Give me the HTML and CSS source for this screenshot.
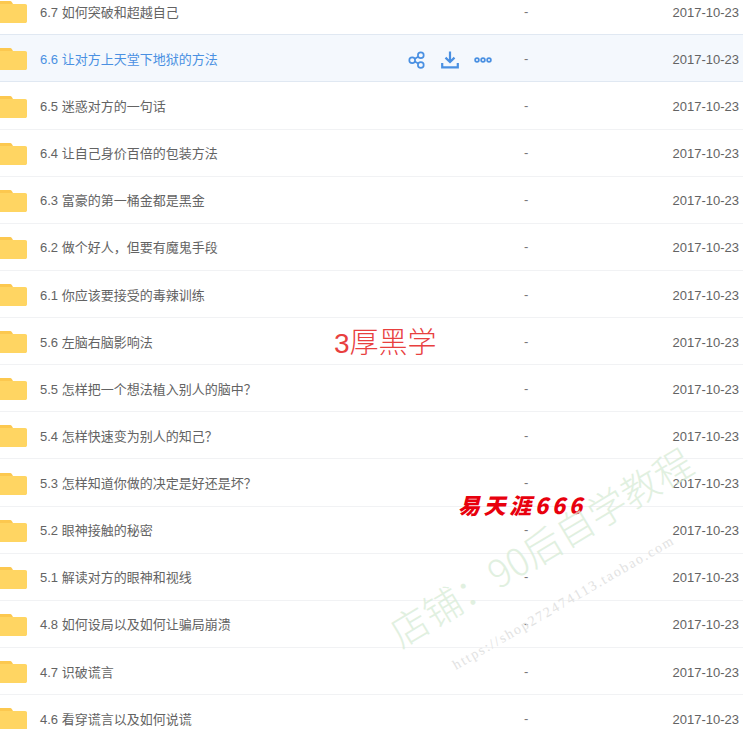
FILE: index.html
```html
<!DOCTYPE html>
<html>
	<head>
	<meta charset="utf-8"/>
	<meta name="viewport" content="width=device-width, initial-scale=1.0"/>
	<link rel="stylesheet" href="styles.css">
	</head>
	<body>
		<div class="list">
			<div class="row"><svg class="folder" viewBox="0 0 27 22"><use href="#folder"/></svg><span class="name">6.7 如何突破和超越自己</span><span class="actions"></span><span class="size">-</span><span class="date">2017-10-23</span></div>
			<div class="row active"><svg class="folder" viewBox="0 0 27 22"><use href="#folder"/></svg><span class="name">6.6 让对方上天堂下地狱的方法</span>
				<span class="actions">
					<svg class="act" viewBox="0 0 18 18"><circle cx="12.8" cy="4.2" r="2.9"/><circle cx="4.2" cy="9.2" r="2.9"/><circle cx="12.8" cy="14" r="2.9"/><path d="M6.8 7.8l3.4-2M6.8 10.6l3.4 2"/></svg>
					<svg class="act" viewBox="0 0 18 18"><path class="thick" d="M9 0.5v10M4.5 6.6L9 11l4.5-4.4M1.2 12v4.3h15.6V12"/></svg>
					<svg class="act" viewBox="0 0 18 18"><circle cx="3" cy="9" r="1.9"/><circle cx="9" cy="9" r="1.9"/><circle cx="15" cy="9" r="1.9"/></svg>
				</span>
				<span class="size">-</span><span class="date">2017-10-23</span></div>
			<div class="row"><svg class="folder" viewBox="0 0 27 22"><use href="#folder"/></svg><span class="name">6.5 迷惑对方的一句话</span><span class="actions"></span><span class="size">-</span><span class="date">2017-10-23</span></div>
			<div class="row"><svg class="folder" viewBox="0 0 27 22"><use href="#folder"/></svg><span class="name">6.4 让自己身价百倍的包装方法</span><span class="actions"></span><span class="size">-</span><span class="date">2017-10-23</span></div>
			<div class="row"><svg class="folder" viewBox="0 0 27 22"><use href="#folder"/></svg><span class="name">6.3 富豪的第一桶金都是黑金</span><span class="actions"></span><span class="size">-</span><span class="date">2017-10-23</span></div>
			<div class="row"><svg class="folder" viewBox="0 0 27 22"><use href="#folder"/></svg><span class="name">6.2 做个好人，但要有魔鬼手段</span><span class="actions"></span><span class="size">-</span><span class="date">2017-10-23</span></div>
			<div class="row"><svg class="folder" viewBox="0 0 27 22"><use href="#folder"/></svg><span class="name">6.1 你应该要接受的毒辣训练</span><span class="actions"></span><span class="size">-</span><span class="date">2017-10-23</span></div>
			<div class="row"><svg class="folder" viewBox="0 0 27 22"><use href="#folder"/></svg><span class="name">5.6 左脑右脑影响法</span><span class="actions"></span><span class="size">-</span><span class="date">2017-10-23</span></div>
			<div class="row"><svg class="folder" viewBox="0 0 27 22"><use href="#folder"/></svg><span class="name">5.5 怎样把一个想法植入别人的脑中？</span><span class="actions"></span><span class="size">-</span><span class="date">2017-10-23</span></div>
			<div class="row"><svg class="folder" viewBox="0 0 27 22"><use href="#folder"/></svg><span class="name">5.4 怎样快速变为别人的知己？</span><span class="actions"></span><span class="size">-</span><span class="date">2017-10-23</span></div>
			<div class="row"><svg class="folder" viewBox="0 0 27 22"><use href="#folder"/></svg><span class="name">5.3 怎样知道你做的决定是好还是坏？</span><span class="actions"></span><span class="size">-</span><span class="date">2017-10-23</span></div>
			<div class="row"><svg class="folder" viewBox="0 0 27 22"><use href="#folder"/></svg><span class="name">5.2 眼神接触的秘密</span><span class="actions"></span><span class="size">-</span><span class="date">2017-10-23</span></div>
			<div class="row"><svg class="folder" viewBox="0 0 27 22"><use href="#folder"/></svg><span class="name">5.1 解读对方的眼神和视线</span><span class="actions"></span><span class="size">-</span><span class="date">2017-10-23</span></div>
			<div class="row"><svg class="folder" viewBox="0 0 27 22"><use href="#folder"/></svg><span class="name">4.8 如何设局以及如何让骗局崩溃</span><span class="actions"></span><span class="size">-</span><span class="date">2017-10-23</span></div>
			<div class="row"><svg class="folder" viewBox="0 0 27 22"><use href="#folder"/></svg><span class="name">4.7 识破谎言</span><span class="actions"></span><span class="size">-</span><span class="date">2017-10-23</span></div>
			<div class="row"><svg class="folder" viewBox="0 0 27 22"><use href="#folder"/></svg><span class="name">4.6 看穿谎言以及如何说谎</span><span class="actions"></span><span class="size">-</span><span class="date">2017-10-23</span></div>
		</div>

		<!-- pasted over the screenshot -->
		<div class="stamp title"><b>3</b>厚黑学</div>
		<div class="stamp author">易天涯666</div>
		<div class="stamp mark">店铺：90后自学教程</div>
		<div class="stamp url">https://shop272474113.taobao.com</div>

		<svg class="defs" width="0" height="0">
			<symbol id="folder" viewBox="0 0 27 22">
				<path fill="#fcc84f" d="M-2 0h11.5c1.2 0 2 .5 2.6 1.4L13 3h-15z"/>
				<path fill="#ffd562" d="M-2 3h27.2c1 0 1.8.8 1.8 1.8v15.4c0 1-.8 1.8-1.8 1.8H-2z"/>
			</symbol>
		</svg>
	</body>
</html>
```
FILE: styles.css
```css
html, body {
	margin: 0;
	padding: 0;
	height: 729px;
	overflow: hidden;
	background-color: #ffffff;
}

body {
	position: relative;
	font-family: "Liberation Sans", "Noto Sans CJK SC", sans-serif;
	font-size: 13px;
	color: #636363;
}

.defs {
	position: absolute;
}

.list {
	margin-top: -11.8px;
}

.row {
	display: grid;
	grid-template-columns: 40px 368px 116px 1fr auto;
	align-items: center;
	height: 47.13px;
	box-sizing: border-box;
	padding-right: 4px;
	border-bottom: 1px solid #f1f2f4;
}

.row.active {
	background-color: #f4f8fd;
	border-bottom-color: #e0e8f2;
	box-shadow: 0 -1px 0 #e0e8f2;
	color: #4a90e2;
}

.row.active .date {
	color: #636363;
}

.folder {
	width: 27px;
	height: 22px;
	margin-top: 2px;
	overflow: hidden;
}

.date {
	margin-top: 2px;
}

.actions {
	display: flex;
	align-items: center;
	gap: 15px;
	margin-top: 3px;
}

.act {
	width: 18px;
	height: 18px;
	fill: none;
	stroke: #4a90e2;
	stroke-width: 1.7;
}

.act .thick {
	stroke-width: 2.2;
}

.size {
	color: #777777;
}

.stamp {
	position: absolute;
	white-space: nowrap;
}

.title {
	left: 334px;
	top: 320px;
	font-family: "Noto Sans CJK SC", sans-serif;
	font-size: 29px;
	font-weight: 300;
	line-height: 40px;
	color: #e8403f;
}

.title b {
	font-family: "Liberation Sans", sans-serif;
	font-size: 28px;
	font-weight: normal;
}

.author {
	left: 458px;
	top: 491px;
	font-family: "Noto Sans CJK SC", sans-serif;
	font-size: 22px;
	font-weight: 900;
	font-style: italic;
	line-height: 26px;
	letter-spacing: 3.6px;
	color: #e8000d;
}

.mark {
	left: 368px;
	top: 524px;
	font-family: "Noto Sans CJK SC", sans-serif;
	font-size: 38px;
	font-weight: 300;
	line-height: 44px;
	color: #d7ecd6;
	opacity: 0.75;
	transform: rotate(-31deg);
}

.url {
	left: 437px;
	top: 594px;
	font-family: "Liberation Serif", serif;
	font-size: 14px;
	line-height: 18px;
	letter-spacing: 1.8px;
	color: #e2e2e2;
	transform: rotate(-30deg);
}
```
